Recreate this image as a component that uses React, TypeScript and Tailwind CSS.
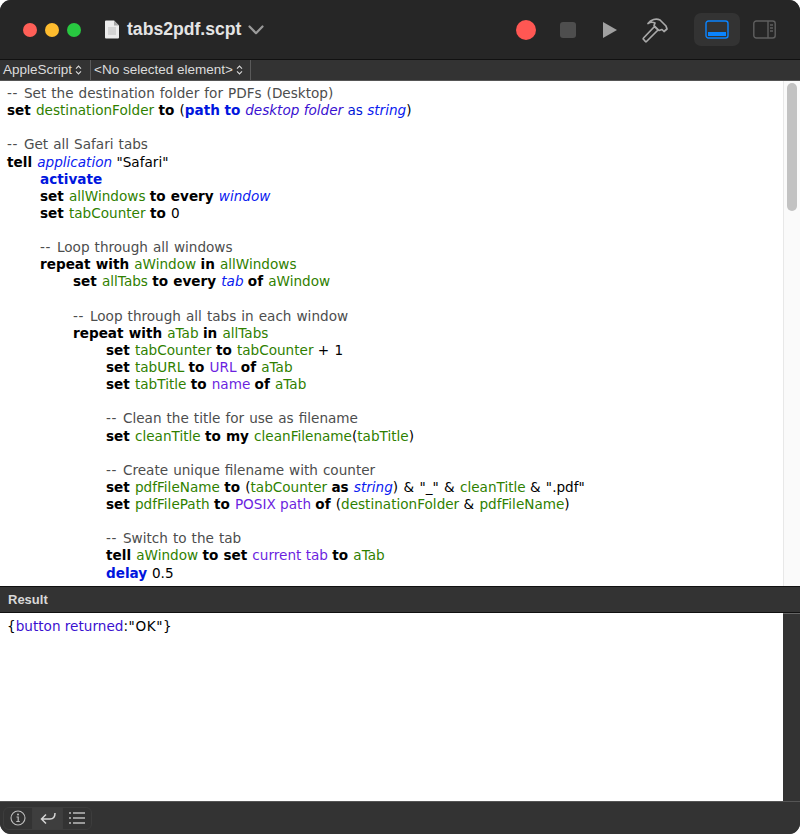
type Kind = 'c' | 'k' | 'v' | 'n' | 'a' | 'i' | 'p' | 'cmd' | 'cl' | 'ci';
type Tok = [Kind, string];
type Line = { indent: number; toks: Tok[] };

const styles: Record<Kind, string> = {
  c: 'text-[#4c4d4d] [word-spacing:0.7px]',
  k: 'font-bold text-black [word-spacing:0.4px]',
  v: 'text-[#2f7f00]',
  n: 'text-black [word-spacing:1px]',
  a: 'text-[#0016d6]',
  i: 'italic text-[#0a20f0]',
  p: 'text-[#6c1fe0]',
  cmd: 'font-bold text-[#0016de]',
  cl: 'italic text-[#3a10d0]',
  ci: 'text-[#3a10d0]',
};

const L = (indent: number, ...toks: Tok[]): Line => ({ indent, toks });

const code: Line[] = [
  L(0, ['c', 'Set the destination folder for PDFs (Desktop)']),
  L(0, ['k', 'set '], ['v', 'destinationFolder '], ['k', 'to '], ['n', '('], ['cmd', 'path to '], ['cl', 'desktop folder '], ['a', 'as '], ['i', 'string'], ['n', ')']),
  L(0),
  L(0, ['c', 'Get all Safari tabs']),
  L(0, ['k', 'tell '], ['i', 'application '], ['n', '"Safari"']),
  L(1, ['cmd', 'activate']),
  L(1, ['k', 'set '], ['v', 'allWindows '], ['k', 'to every '], ['i', 'window']),
  L(1, ['k', 'set '], ['v', 'tabCounter '], ['k', 'to '], ['n', '0']),
  L(0),
  L(1, ['c', 'Loop through all windows']),
  L(1, ['k', 'repeat with '], ['v', 'aWindow '], ['k', 'in '], ['v', 'allWindows']),
  L(2, ['k', 'set '], ['v', 'allTabs '], ['k', 'to every '], ['i', 'tab '], ['k', 'of '], ['v', 'aWindow']),
  L(0),
  L(2, ['c', 'Loop through all tabs in each window']),
  L(2, ['k', 'repeat with '], ['v', 'aTab '], ['k', 'in '], ['v', 'allTabs']),
  L(3, ['k', 'set '], ['v', 'tabCounter '], ['k', 'to '], ['v', 'tabCounter '], ['n', '+ 1']),
  L(3, ['k', 'set '], ['v', 'tabURL '], ['k', 'to '], ['p', 'URL '], ['k', 'of '], ['v', 'aTab']),
  L(3, ['k', 'set '], ['v', 'tabTitle '], ['k', 'to '], ['p', 'name '], ['k', 'of '], ['v', 'aTab']),
  L(0),
  L(3, ['c', 'Clean the title for use as filename']),
  L(3, ['k', 'set '], ['v', 'cleanTitle '], ['k', 'to my '], ['v', 'cleanFilename'], ['n', '('], ['v', 'tabTitle'], ['n', ')']),
  L(0),
  L(3, ['c', 'Create unique filename with counter']),
  L(3, ['k', 'set '], ['v', 'pdfFileName '], ['k', 'to '], ['n', '('], ['v', 'tabCounter '], ['k', 'as '], ['i', 'string'], ['n', ') & "_" & '], ['v', 'cleanTitle '], ['n', '& ".pdf"']),
  L(3, ['k', 'set '], ['v', 'pdfFilePath '], ['k', 'to '], ['p', 'POSIX path '], ['k', 'of '], ['n', '('], ['v', 'destinationFolder '], ['n', '& '], ['v', 'pdfFileName'], ['n', ')']),
  L(0),
  L(3, ['c', 'Switch to the tab']),
  L(3, ['k', 'tell '], ['v', 'aWindow '], ['k', 'to set '], ['p', 'current tab '], ['k', 'to '], ['v', 'aTab']),
  L(3, ['cmd', 'delay '], ['n', '0.5']),
];

const indents = ['pl-0', 'pl-[33px]', 'pl-[66px]', 'pl-[99px]'];

function Updown() {
  return (
    <svg width="7" height="10" viewBox="0 0 7 10" fill="none" stroke="#d8d8d8" strokeWidth="1.1" className="ml-[3px]">
      <path d="M1 3.6 3.5 1 6 3.6M1 6.4 3.5 9 6 6.4" />
    </svg>
  );
}

function DocIcon() {
  return (
    <svg width="16" height="19" viewBox="0 0 16 19">
      <path d="M1 1.5A1 1 0 0 1 2 .5h8l5 5v12a1 1 0 0 1-1 1H2a1 1 0 0 1-1-1z" fill="#ececec" />
      <path d="M10 .5v5h5z" fill="#a8a8a8" />
      <path d="M4 8h8M4 10h8M4 12h8M4 14h8" stroke="#bdbdbd" strokeWidth="1" />
    </svg>
  );
}

function Chevron() {
  return (
    <svg width="16" height="10" viewBox="0 0 16 10" fill="none" stroke="#9a9a9a" strokeWidth="2.2" strokeLinecap="round" strokeLinejoin="round">
      <path d="M1.500 1.500 8 8.200l6.500-6.700" />
    </svg>
  );
}

function Hammer() {
  return (
    <svg width="26" height="26" viewBox="0 0 26 26" fill="none" stroke="#a9a9a9" strokeWidth="1.7" strokeLinejoin="round">
      <path d="M1.500 21 12.500 9.500l3.500 3.500L4.500 24.500a.8.8 0 0 1-1.100 0L1.500 22.300a.9.9 0 0 1 0-1.300z" />
      <path d="M6 6.500C9 2.500 14 1 18 3l6 6 1 3-3 2.500-2-2-3 1-5-5 1-2.500C11 5 8.500 5 6 6.500z" />
    </svg>
  );
}

function PaneBottom() {
  return (
    <svg width="24" height="20" viewBox="0 0 24 20" fill="none">
      <rect x="1" y="1" width="22" height="17" rx="2.5" stroke="#0a84ff" strokeWidth="1.4" />
      <rect x="3" y="12" width="18" height="4" fill="#0a84ff" />
    </svg>
  );
}

function PaneRight() {
  return (
    <svg width="23" height="20" viewBox="0 0 23 20" fill="none" stroke="#5f5f5f" strokeWidth="1.4">
      <rect x=".8" y="1" width="21.400" height="17" rx="2.5" />
      <path d="M15 1v17M17 5h3M17 8h3M17 11h3" />
    </svg>
  );
}

function InfoIcon() {
  return (
    <svg width="16" height="16" viewBox="0 0 16 16" fill="none" stroke="#bdbdbd">
      <circle cx="8" cy="8" r="7" strokeWidth="1.100" />
      <path d="M6.500 7h1.700v4.200M6.300 11.500h3.500" strokeWidth="1.200" />
      <circle cx="8" cy="4.600" r="1" fill="#bdbdbd" stroke="none" />
    </svg>
  );
}

function ReturnIcon() {
  return (
    <svg width="16" height="13" viewBox="0 0 16 13" fill="none" stroke="#d6d6d6" strokeWidth="1.500">
      <path d="M15 1c0 4-2 6-5 6H2M6 2.500 1.500 7 6 11.500" />
    </svg>
  );
}

function ListIcon() {
  return (
    <svg width="16" height="12" viewBox="0 0 16 12" fill="none" stroke="#bdbdbd" strokeWidth="1.400">
      <path d="M0 1h2M4 1h12M0 6h2M4 6h12M0 11h2M4 11h12" />
    </svg>
  );
}

export default function App() {
  return (
    <div className="w-[800px] h-[834px] flex flex-col bg-white font-['DejaVu_Sans',sans-serif]">
      <div className="flex flex-col flex-1 min-h-0 overflow-hidden rounded-[11px] bg-[#333]">
        <div className="h-[60px] shrink-0 flex items-center bg-[#262626] border-b border-[#111] font-['Liberation_Sans',sans-serif]">
          <div className="flex items-center gap-[8px] ml-[23px]">
            <span className="w-[14px] h-[14px] rounded-full bg-[#ff5f57]" />
            <span className="w-[14px] h-[14px] rounded-full bg-[#febc2e]" />
            <span className="w-[14px] h-[14px] rounded-full bg-[#28c840]" />
          </div>
          <div className="ml-[23px]"><DocIcon /></div>
          <span className="ml-[7px] w-[114px] text-[17.6px] font-bold text-[#e4e4e4] whitespace-nowrap">tabs2pdf.scpt</span>
          <div className="ml-[7px]"><Chevron /></div>
          <span className="ml-[252px] w-[20px] h-[20px] rounded-full bg-[#ff5753]" />
          <span className="ml-[24px] w-[16px] h-[16px] rounded-[3px] bg-[#4e4e4e]" />
          <svg width="16" height="18" viewBox="0 0 16 18" className="ml-[26px]">
            <path d="M1 1 15 9 1 17z" fill="#a0a0a0" />
          </svg>
          <div className="ml-[24px]"><Hammer /></div>
          <div className="ml-[26px] w-[46px] h-[33px] rounded-[7px] bg-[#333] flex items-center justify-center"><PaneBottom /></div>
          <div className="ml-[13px]"><PaneRight /></div>
        </div>

        <div className="h-[21px] shrink-0 flex items-center bg-[#333] border-b border-[#555] text-[13.5px] text-[#dcdcdc] font-['Liberation_Sans',sans-serif]">
          <div className="flex items-center pl-[3px] w-[91px] h-full border-r border-[#5a5a5a]">
            <span>AppleScript</span>
            <Updown />
          </div>
          <div className="flex items-center pl-[3px] w-[160px] h-full border-r border-[#5a5a5a]">
            <span>&lt;No selected element&gt;</span>
            <Updown />
          </div>
        </div>

        <div className="h-[505px] shrink-0 flex bg-white overflow-hidden">
          <div className="flex-1 pl-[7px] pt-[4px] text-[13.6px] leading-[17.14px] whitespace-pre">
            {code.map((line, i) => (
              <div key={i} className={`h-[17.14px] ${indents[line.indent]}`}>
                {line.toks.map(([kind, text], j) =>
                  kind === 'c' ? (
                    <span key={j} className={styles.c}>
                      <span className="tracking-[0.7px]">{'-- '}</span>
                      {text}
                    </span>
                  ) : (
                    <span key={j} className={styles[kind]}>{text}</span>
                  ),
                )}
              </div>
            ))}
          </div>
          <div className="w-[17px] shrink-0 bg-[#fafafa] border-l border-[#e8e8e8] px-[3px] pt-[2px]">
            <div className="h-[128px] rounded-full bg-[#c2c2c2]" />
          </div>
        </div>

        <div className="h-[27px] shrink-0 flex items-center pl-[8px] bg-[#333] border-y border-[#111] text-[13px] font-bold text-[#d8d8d8] font-['Liberation_Sans',sans-serif]">
          Result
        </div>

        <div className="flex-1 min-h-0 flex">
          <div className="flex-1 bg-white pl-[7px] pt-[5px] text-[13.6px] leading-[17.14px] text-black">
            {'{'}<span className="text-[#3a10d0]">button returned</span><span className="tracking-[0.6px]">:"OK"{'}'}</span>
          </div>
          <div className="w-[17px] shrink-0 bg-[#333] border-t border-[#666]" />
        </div>

        <div className="h-[33px] shrink-0 flex items-center pl-[3px] bg-[#333] border-t border-[#555]">
          <div className="flex h-[23px] rounded-[6px] border border-[#3d3d3d] overflow-hidden">
            <div className="w-[29px] flex items-center justify-center border-r border-[#3d3d3d]"><InfoIcon /></div>
            <div className="w-[30px] flex items-center justify-center bg-[#3e3e3e] border-r border-[#3d3d3d]"><ReturnIcon /></div>
            <div className="w-[28px] flex items-center justify-center"><ListIcon /></div>
          </div>
        </div>
      </div>
    </div>
  );
}
